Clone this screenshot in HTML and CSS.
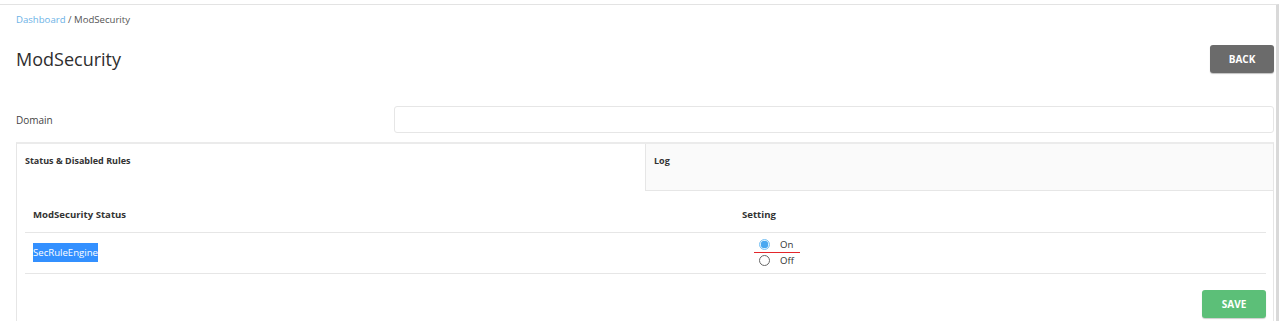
FILE: index.html
```html
<!DOCTYPE html>
<html>
<head>
<meta charset="utf-8">
<link rel="stylesheet" href="styles.css">
</head>
<body>
<div class="frame">
  <div class="content">
    <div class="crumbs"><a class="crumb-link">Dashboard</a> / ModSecurity</div>
    <div class="title-row">
      <h1 class="title">ModSecurity</h1>
      <button class="btn btn-back">BACK</button>
    </div>
    <div class="field-row">
      <label class="field-label">Domain</label>
      <input class="field-input" type="text">
    </div>
    <div class="panel">
      <div class="tabs">
        <div class="tab tab-active">Status &amp; Disabled Rules</div>
        <div class="tab">Log</div>
      </div>
      <div class="panel-body">
        <table class="grid">
          <thead>
            <tr><th class="col-name">ModSecurity Status</th><th>Setting</th></tr>
          </thead>
          <tbody>
            <tr>
              <td class="col-name"><span class="selected">SecRuleEngine</span></td>
              <td>
                <div class="radios">
                  <label class="radio radio-on"><span class="dot dot-on"></span>On</label>
                  <label class="radio"><span class="dot"></span>Off</label>
                </div>
              </td>
            </tr>
          </tbody>
        </table>
        <div class="actions"><button class="btn btn-save">SAVE</button></div>
      </div>
    </div>
  </div>
</div>
</body>
</html>
```

FILE: styles.css
```css
* { box-sizing: border-box; }
html, body { margin: 0; padding: 0; background: #fff; }
body { font-family: "Open Sans", "Liberation Sans", sans-serif; color: #333; overflow: hidden; height: 321px; }
.frame {
  margin-top: 4px;
  width: 1279px;
  height: 317px;
  border-top: 1px solid #e3e3e3;
  border-right: 3px solid #d9d9d9;
  overflow: hidden;
}
.content { padding: 0 2px 0 16px; }
.crumbs { font-size: 9.6px; line-height: 14px; padding-top: 8px; color: #555; }
.crumb-link { color: #6cb2e6; }
.title-row { display: flex; justify-content: space-between; align-items: center; margin-top: 18px; height: 28px; }
.title { margin: 0; font-size: 18px; font-weight: 400; color: #2e2e2e; line-height: 28px; }
.btn { border: none; border-radius: 3px; color: #fff; font-family: "Open Sans", "Liberation Sans", sans-serif; font-weight: 700; font-size: 10px; width: 64px; height: 28px; padding: 0; }
.btn-back { background: #6b6b6b; box-shadow: 0 1px 1px rgba(0,0,0,0.25); }
.field-row { display: flex; align-items: center; margin-top: 33px; height: 27px; }
.field-label { width: 378px; font-size: 10px; color: #444; }
.field-input { flex: 1; height: 27px; border: 1px solid #e6e6e6; border-radius: 3px; background: #fff; }
.panel { margin-top: 9px; border-top: 2px solid #ebebeb; border-left: 1px solid #e6e6e6; border-right: 1px solid #e6e6e6; height: 200px; }
.tabs { display: flex; height: 47px; }
.tab { width: 50%; font-size: 9px; font-weight: 700; color: #333; padding: 10px 0 0 8px; }
.tab + .tab { background: #fafafa; border-left: 1px solid #e6e6e6; border-bottom: 1px solid #e6e6e6; padding-left: 8px; }
.panel-body { padding: 0 7px 0 8px; }
.grid { width: 100%; border-collapse: collapse; font-size: 9.6px; }
.grid th { text-align: left; font-weight: 700; font-size: 9.6px; height: 41px; padding: 7px 8px 0; border-bottom: 1px solid #e6e6e6; }
.grid td { height: 41px; padding: 0 8px; border-bottom: 1px solid #e6e6e6; vertical-align: middle; }
.col-name { width: 709px; }
.selected { background: #3390ff; color: #fff; padding: 3px 0; font-size: 9.6px; }
.radios { display: flex; flex-direction: column; gap: 4px; padding-left: 17px; }
.radio { display: flex; align-items: center; gap: 10px; font-size: 9.6px; color: #333; height: 12px; position: relative; }
.radio-on::after { content: ""; position: absolute; left: -5px; top: 13px; width: 46px; height: 1.5px; background: #e3262b; }
.dot { width: 11px; height: 11px; border-radius: 50%; border: 1px solid #666; background: #fff; box-sizing: border-box; }
.dot-on { border: 1px solid #7ac3f5; background: radial-gradient(circle, #4aa8f0 0 3.5px, #dceffc 4px); }
.actions { display: flex; justify-content: flex-end; margin-top: 16px; }
.btn-save { background: #5cbf78; box-shadow: 0 1px 1px rgba(0,0,0,0.2); }
```
